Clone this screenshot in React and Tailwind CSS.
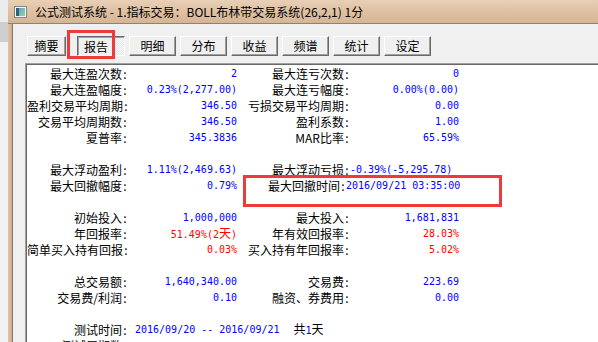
import React from "react";

const CJK = "font-['Noto_Sans_CJK_SC',sans-serif]";
const MONO = "font-['DejaVu_Sans_Mono','Liberation_Mono',monospace]";

function Label({ children, className = "" }) {
  return (
    <div className={`text-right whitespace-nowrap text-[12px] text-black ${CJK} ${className}`}>
      {children}
      <span className="inline-block w-[6px] text-center">:</span>
    </div>
  );
}

function Val({ children, color = "blue", align = "right", className = "" }) {
  const c = color === "red" ? "text-[#ff0000]" : "text-[#0000ff]";
  const a = align === "left" ? "text-left" : "text-right";
  return (
    <div className={`whitespace-nowrap text-[10px] ${MONO} ${c} ${a} ${className}`}>
      {children}
    </div>
  );
}

const rows = [
  ["最大连盈次数", "2", "blue", "最大连亏次数", "0", "blue"],
  ["最大连盈幅度", "0.23%(2,277.00)", "blue", "最大连亏幅度", "0.00%(0.00)", "blue"],
  ["盈利交易平均周期", "346.50", "blue", "亏损交易平均周期", "0.00", "blue"],
  ["交易平均周期数", "346.50", "blue", "盈利系数", "1.00", "blue"],
  ["夏普率", "345.3836", "blue", "MAR比率", "65.59%", "blue"],
  null,
  ["最大浮动盈利", "1.11%(2,469.63)", "blue", "最大浮动亏损", "-0.39%(-5,295.78)", "blue", "left"],
  ["最大回撤幅度", "0.79%", "blue", "最大回撤时间", "2016/09/21 03:35:00", "blue", "time"],
  null,
  ["初始投入", "1,000,000", "blue", "最大投入", "1,681,831", "blue"],
  ["年回报率", "51.49%(2天)", "red", "年有效回报率", "28.03%", "red"],
  ["简单买入持有回报", "0.03%", "red", "买入持有年回报率", "5.02%", "red"],
  null,
  ["总交易额", "1,640,340.00", "blue", "交易费", "223.69", "blue"],
  ["交易费/利润", "0.10", "blue", "融资、券费用", "0.00", "blue"],
  null,
];

function renderValue(v) {
  if (v.includes("天")) {
    const [a, b] = v.split("天");
    return (
      <>
        {a}
        <span className={`text-[12px] ${CJK}`}>天</span>
        {b}
      </>
    );
  }
  return v;
}

function Row({ r }) {
  if (!r) return <div className="h-4" />;
  const [l1, v1, c1, l2, v2, c2, special] = r;
  return (
    <div className="flex h-4 leading-4 items-center">
      <Label className="w-[101px] shrink-0">{l1}</Label>
      <Val color={c1} className="w-[109px] shrink-0">{renderValue(v1)}</Val>
      {special === "time" ? (
        <>
          <Label className="w-[109px] shrink-0">{l2}</Label>
          <Val color={c2} align="left" className="w-[113px] shrink-0">{v2}</Val>
        </>
      ) : (
        <>
          <Label className="w-[113px] shrink-0">{l2}</Label>
          <Val color={c2} align={special === "left" ? "left" : "right"} className="w-[109px] shrink-0">
            {v2}
          </Val>
        </>
      )}
    </div>
  );
}

function Tab({ label, w = "w-[47px]", className = "" }) {
  return (
    <div
      className={`${w} h-[20px] shrink-0 flex items-center justify-center border border-t-white border-l-white border-r-[#696969] border-b-[#696969] shadow-[inset_-1px_-1px_0_#a0a0a0] bg-[#f0f0f0] text-[12px] text-black leading-none ${CJK} ${className}`}
    >
      {label}
    </div>
  );
}

function PressedTab() {
  return (
    <div
      className={`w-[48px] h-[20px] shrink-0 ml-[11px] flex border border-t-[#696969] border-l-[#696969] border-r-white border-b-white shadow-[inset_1px_1px_0_#a0a0a0] text-[12px] text-black leading-none ${CJK}`}
    >
      <div className="w-[34px] ml-px mt-px flex items-center justify-center bg-[#f0f0f0]">报告</div>
      <div className="flex-1 mt-px bg-[repeating-conic-gradient(#ffffff_0_25%,#e4e4e4_0_50%)] bg-[length:2px_2px]" />
    </div>
  );
}

function TitleIcon() {
  return (
    <svg width="13" height="12" viewBox="0 0 13 12" className="shrink-0">
      <defs>
        <linearGradient id="ig" x1="0" y1="0" x2="1" y2="1">
          <stop offset="0" stopColor="#5aa6c9" />
          <stop offset="1" stopColor="#9fd19a" />
        </linearGradient>
      </defs>
      <rect x="0.5" y="0.5" width="12" height="11" fill="#f4f4f4" stroke="#7c8a96" />
      <rect x="2" y="2" width="3" height="8" fill="#2e6272" />
      <rect x="5" y="2" width="6" height="8" fill="url(#ig)" />
    </svg>
  );
}

export default function App() {
  return (
    <div className="relative w-[598px] h-[342px] overflow-hidden flex bg-[#f0f0f0]">
      {/* background behind window */}
      <div className="w-[8px] shrink-0 flex flex-col">
        <div className="h-[22px] bg-[#ececec]" />
        <div className="h-[20px] bg-[#cfcfcf]" />
        <div className="flex-1 bg-[#f2f2f2]" />
      </div>

      {/* window */}
      <div className="flex-1 flex flex-col min-w-0">
        <div className="h-[24px] shrink-0 flex items-center pl-[6px] bg-gradient-to-b from-[#e8cfb5] via-[#dfc1a3] to-[#d6b593] border-b border-[#8e8275]">
          <TitleIcon />
          <span className={`ml-[8px] text-[12px] text-black whitespace-nowrap leading-none ${CJK}`}>
            公式测试系统 - 1.指标交易：BOLL布林带交易系统(26,2,1) 1分
          </span>
        </div>

        <div className="flex-1 flex min-h-0">
          <div className="w-[4px] shrink-0 bg-gradient-to-r from-[#e2c6a8] to-[#cdab8b]" />
          <div className="w-px shrink-0 bg-[#857767]" />
          <div className="flex-1 flex flex-col min-w-0 bg-[#f0f0f0]">
            {/* tab row */}
            <div className="h-[39px] shrink-0 flex items-start pt-[12px] pl-[14px]">
              <Tab label="摘要" w="w-[39px]" />
              <PressedTab />
              <Tab label="明细" className="ml-[4px]" />
              <Tab label="分布" className="ml-[4px]" />
              <Tab label="收益" className="ml-[4px]" />
              <Tab label="频谱" className="ml-[4px]" />
              <Tab label="统计" className="ml-[4px]" />
              <Tab label="设定" className="ml-[4px]" />
            </div>

            {/* report panel */}
            <div className="flex-1 ml-[12px] border-t border-l border-[#a0a0a0] shadow-[inset_1px_1px_0_#696969] bg-white pt-[2px] pl-px overflow-hidden">
              {rows.map((r, i) => (
                <Row key={i} r={r} />
              ))}
              <div className="flex h-4 leading-4 items-center">
                <Label className="w-[101px] shrink-0">测试时间</Label>
                <div className={`pl-[7px] whitespace-nowrap text-[10px] ${MONO} text-[#0000ff]`}>
                  2016/09/20 -- 2016/09/21
                </div>
                <div className={`ml-[14px] whitespace-nowrap text-[12px] text-black ${CJK}`}>
                  共<span className={`text-[10px] ${MONO} text-[#0000ff]`}>1</span>天
                </div>
              </div>
              <div className="flex h-4 leading-4 items-center">
                <Label className="w-[101px] shrink-0">测试周期数</Label>
              </div>
            </div>
          </div>
        </div>
      </div>

      {/* red highlight boxes */}
      <div className="absolute left-[67px] top-[30px] w-[48px] h-[29px] border-[3px] border-[#ef3a3a]" />
      <div className="absolute left-[243px] top-[175px] w-[259px] h-[32px] border-[3px] border-[#ef3a3a]" />
    </div>
  );
}
